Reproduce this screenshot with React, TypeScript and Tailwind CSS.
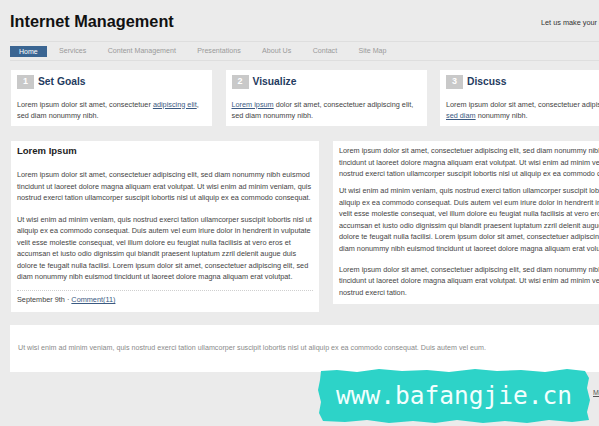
import React from "react";

const P1 =
  "Lorem ipsum dolor sit amet, consectetuer adipiscing elit, sed diam nonummy nibh euismod tincidunt ut laoreet dolore magna aliquam erat volutpat. Ut wisi enim ad minim veniam, quis nostrud exerci tation ullamcorper suscipit lobortis nisl ut aliquip ex ea commodo consequat.";
const P2 =
  "Ut wisi enim ad minim veniam, quis nostrud exerci tation ullamcorper suscipit lobortis nisl ut aliquip ex ea commodo consequat. Duis autem vel eum iriure dolor in hendrerit in vulputate velit esse molestie consequat, vel illum dolore eu feugiat nulla facilisis at vero eros et accumsan et iusto odio dignissim qui blandit praesent luptatum zzril delenit augue duis dolore te feugait nulla facilisi. Lorem ipsum dolor sit amet, consectetuer adipiscing elit, sed diam nonummy nibh euismod tincidunt ut laoreet dolore magna aliquam erat volutpat.";
const P3 =
  "Lorem ipsum dolor sit amet, consectetuer adipiscing elit, sed diam nonummy nibh euismod tincidunt ut laoreet dolore magna aliquam erat volutpat. Ut wisi enim ad minim veniam, quis nostrud exerci tation.";

const nav = ["Home", "Services", "Content Management", "Presentations", "About Us", "Contact", "Site Map"];

function Box({ n, title, children }: { n: string; title: string; children: React.ReactNode }) {
  return (
    <div className="w-[201px] h-[56px] shrink-0 bg-white px-[6px] pt-[5px]">
      <div className="flex items-center h-[14px]">
        <div className="w-[17px] h-[14px] bg-[#c9c9c9] text-white text-[9px] font-bold flex items-center justify-center">
          {n}
        </div>
        <div className="ml-[4px] text-[10.3px] font-bold text-[#1f3b60] leading-none">{title}</div>
      </div>
      <p className="mt-[9.5px] text-[7.3px] leading-[11.5px] text-[#444]">{children}</p>
    </div>
  );
}

const link = "text-[#3b5a82] underline";

export default function App() {
  return (
    <div className="w-full min-h-[426px] bg-[#ebebeb] overflow-hidden relative font-['Liberation_Sans',Arial,sans-serif]">
      <div className="w-[631px] ml-[10px]">
        {/* header */}
        <div className="flex h-[41px]">
          <div className="w-[531px] shrink-0 pt-[13px] text-[16.3px] font-bold leading-none text-[#111]">Internet Management</div>
          <div className="shrink-0 pt-[19px] text-[7.3px] leading-none text-[#333] whitespace-nowrap">
            Let us make your internet work for you
          </div>
        </div>
        {/* nav */}
        <div className="h-[20px] border-y border-[#dedede] flex items-center gap-[3.4px]">
          {nav.map((item, i) =>
            i === 0 ? (
              <div key={item} className="bg-[#3a6592] text-white h-[11px] px-[9px] leading-[11px] text-[7px]">
                {item}
              </div>
            ) : (
              <div key={item} className="px-[9px] text-[7.1px] leading-[11px] text-[#9a9a9a] whitespace-nowrap">
                {item}
              </div>
            )
          )}
        </div>
        {/* boxes */}
        <div className="mt-[9px] flex gap-[13.5px] pl-[1px]">
          <Box n="1" title="Set Goals">
            Lorem ipsum dolor sit amet, consectetuer <span className={link}>adipiscing elit</span>, sed diam nonummy nibh.
          </Box>
          <Box n="2" title="Visualize">
            <span className={link}>Lorem ipsum</span> dolor sit amet, consectetuer adipiscing elit, sed diam nonummy nibh.
          </Box>
          <Box n="3" title="Discuss">
            Lorem ipsum dolor sit amet, consectetuer adipiscing elit, <span className={link}>sed diam</span> nonummy nibh.
          </Box>
        </div>
        {/* main */}
        <div className="mt-[15px] flex gap-[14px] items-start pl-[1px]">
          <div className="w-[308px] shrink-0 bg-white px-[6px] pt-[4px] pb-[1px]">
            <h2 className="text-[9.5px] font-bold leading-[12px] text-[#222]">Lorem Ipsum</h2>
            <div className="mt-[12px] text-[7.3px] leading-[11.5px] text-[#444]">
              <p>{P1}</p>
              <p className="mt-[10px]">{P2}</p>
            </div>
            <div className="mt-[7px] border-t border-dotted border-[#cfcfcf] h-[21px] flex items-center text-[7.3px] text-[#444]">
              <span>
                September 9th · <span className={link}>Comment(11)</span>
              </span>
            </div>
          </div>
          <div className="w-[308px] shrink-0 bg-white px-[6px] pt-[4px] pb-[6px] text-[7.3px] leading-[11.5px] text-[#444]">
            <p>{P1}</p>
            <p className="mt-[5.5px]">{P2}</p>
            <p className="mt-[9.5px]">{P3}</p>
          </div>
        </div>
        {/* footer */}
        <div className="mt-[13px] h-[47px] bg-white flex items-center px-[8px] text-[7.15px] text-[#8a8a8a] whitespace-nowrap">
          Ut wisi enim ad minim veniam, quis nostrud exerci tation ullamcorper suscipit lobortis nisl ut aliquip ex ea commodo consequat. Duis autem vel eum.
        </div>
        <div className="mt-[16px] pl-[583px] text-[7px] text-[#555] whitespace-nowrap">
          <span className="underline">More</span>
        </div>
      </div>
      {/* watermark */}
      <div className="absolute left-[317px] top-[368px] w-[274px] h-[56px]">
        <svg className="absolute inset-0" width="274" height="56" viewBox="0 0 274 56">
          <polygon
            fill="#2dd3c8"
            points="4,3 20,2 40,4 62,1 85,3 110,2 132,4 158,1 180,3 204,2 228,4 250,1 268,3 272,10 270,20 273,32 270,44 272,52 255,54 232,52 210,55 188,53 166,55 140,52 118,55 96,53 72,55 50,52 28,54 6,53 2,45 4,34 1,22 3,12"
          />
        </svg>
        <div className="absolute inset-0 flex items-center justify-center text-[24.5px] leading-none text-[#f2fffe] font-['DejaVu_Sans_Mono',monospace]">
          www.bafangjie.cn
        </div>
      </div>
    </div>
  );
}
